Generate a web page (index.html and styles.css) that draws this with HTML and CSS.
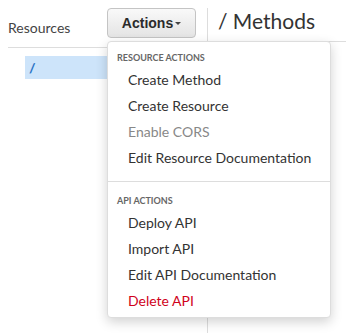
FILE: index.html
```html
<!DOCTYPE html>
<html lang="en">
<head>
    <meta charset="UTF-8">
    <meta name="viewport" content="width=device-width, initial-scale=1.0">
    <title>Resources</title>
    <link rel="stylesheet" href="styles.css">
</head>
<body>
    <div class="console">
        <div class="sidebar">
            <div class="sidebar-head">
                <h2 class="sidebar-title">Resources</h2>
                <div class="actions">
                    <button class="actions-btn">Actions<span class="caret"></span></button>
                    <div class="menu">
                        <div class="menu-label">RESOURCE ACTIONS</div>
                        <div class="menu-item">Create Method</div>
                        <div class="menu-item">Create Resource</div>
                        <div class="menu-item disabled">Enable CORS</div>
                        <div class="menu-item">Edit Resource Documentation</div>
                        <div class="menu-divider"></div>
                        <div class="menu-label">API ACTIONS</div>
                        <div class="menu-item">Deploy API</div>
                        <div class="menu-item">Import API</div>
                        <div class="menu-item">Edit API Documentation</div>
                        <div class="menu-item danger">Delete API</div>
                    </div>
                </div>
            </div>
            <div class="tree">
                <div class="tree-row selected">/</div>
            </div>
        </div>
        <div class="main">
            <h1 class="main-title">/ Methods</h1>
        </div>
    </div>
</body>
</html>
```

FILE: styles.css
```css
body { margin: 0; font-family: Lato, "Open Sans", sans-serif; color: #333; background: #fff; }
.console { display: flex; height: 333px; padding-top: 8px; box-sizing: border-box; }
.sidebar { width: 199px; margin-left: 8px; border-right: 1px solid #ddd; }
.sidebar-head { display: flex; justify-content: space-between; align-items: flex-start; height: 39px; padding-right: 11px; border-bottom: 1px solid #ddd; }
.sidebar-title { margin: 11px 0 0; font-size: 14px; font-weight: normal; line-height: 17px; color: #444; }
.actions { position: relative; }
.actions-btn { display: flex; align-items: center; justify-content: center; width: 89px; height: 30px; padding: 0; border: 1px solid #c4c4c4; border-radius: 4px; background: linear-gradient(#f9f9f9, #e4e4e4); font-family: "Liberation Sans", Arial, sans-serif; font-size: 14px; font-weight: bold; color: #2b2b2b; }
.caret { width: 0; height: 0; margin-left: 2px; border-left: 3px solid transparent; border-right: 3px solid transparent; border-top: 3px solid #444; }
.menu { position: absolute; top: 33px; left: 0; width: 222px; padding: 10px 0 3px; background: #fff; border: 1px solid #ddd; border-radius: 4px; box-shadow: 0 4px 12px rgba(0,0,0,0.18); z-index: 2; }
.menu-label { padding-left: 9px; margin-bottom: 3px; font-size: 9px; font-weight: bold; line-height: 12px; color: #666; }
.menu-item { padding-left: 20px; font-size: 14px; line-height: 26px; color: #333; }
.menu-item.disabled { color: #888; }
.menu-item.danger { color: #d0021b; }
.menu-divider { border-top: 1px solid #ddd; margin: 10px 0 13px; }
.tree { padding: 8px 0 0 17px; }
.tree-row { height: 23px; padding-left: 4px; line-height: 23px; font-size: 14px; font-weight: bold; color: #2a72c4; }
.tree-row.selected { background: #cde4fa; }
.main { flex: 1; }
.main-title { margin: 0; height: 33px; padding-left: 10px; font-size: 21px; font-weight: normal; line-height: 25px; color: #333; border-bottom: 1px solid #ddd; }
```
